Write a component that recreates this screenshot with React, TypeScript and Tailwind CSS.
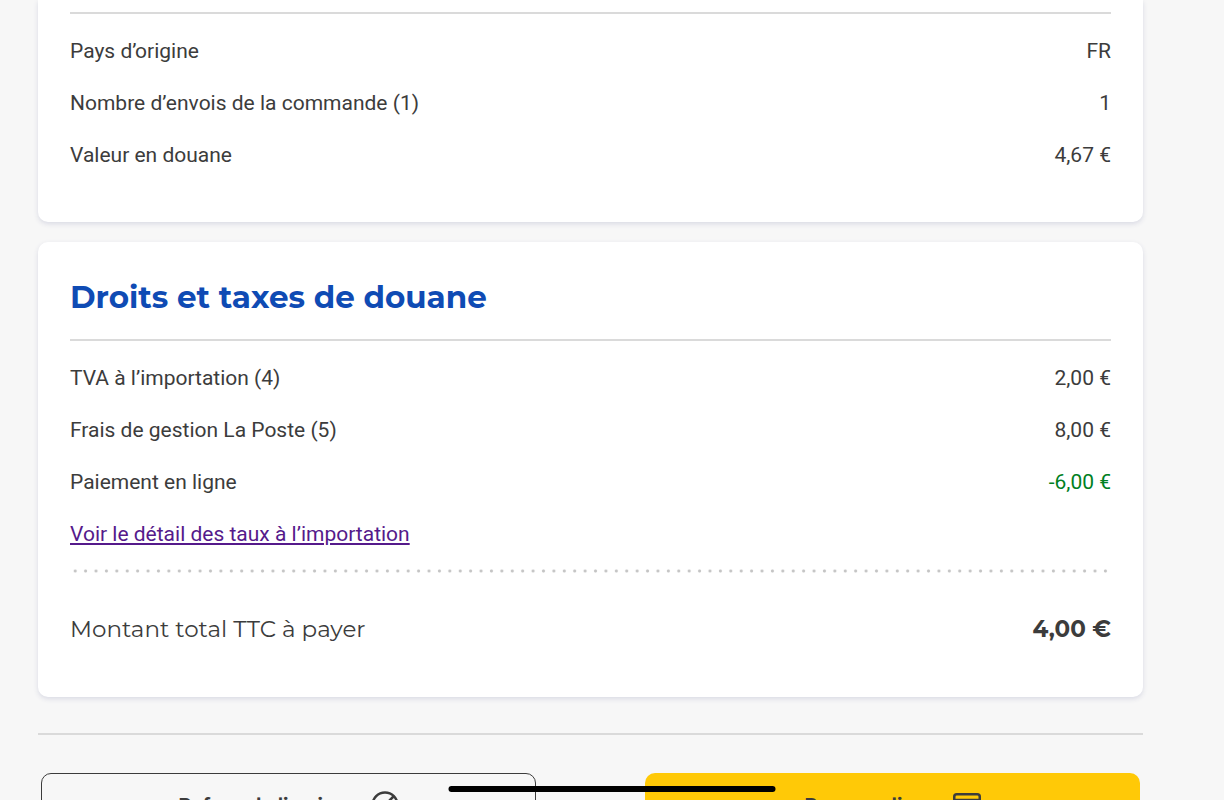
import React from 'react';

interface Line {
  label: string;
  value: string;
  positive?: boolean;
}

const shipment: Line[] = [
  { label: 'Pays d’origine', value: 'FR' },
  { label: 'Nombre d’envois de la commande (1)', value: '1' },
  { label: 'Valeur en douane', value: '4,67 €' },
];

const taxes: Line[] = [
  { label: 'TVA à l’importation (4)', value: '2,00 €' },
  { label: 'Frais de gestion La Poste (5)', value: '8,00 €' },
  { label: 'Paiement en ligne', value: '-6,00 €', positive: true },
];

const Lines: React.FC<{ lines: Line[] }> = ({ lines }) => (
  <dl>
    {lines.map((line) => (
      <div key={line.label} className="flex h-[52px] items-center justify-between">
        <dt>{line.label}</dt>
        <dd className={line.positive ? 'text-[#00801f]' : ''}>{line.value}</dd>
      </div>
    ))}
  </dl>
);

const RefuseIcon = () => (
  <svg className="size-7" viewBox="0 0 28 28" fill="none" stroke="currentColor" strokeWidth="2.5" aria-hidden="true">
    <circle cx="14" cy="14" r="12.5" />
    <path d="M5.5 22.5 22.5 5.5" />
  </svg>
);

const CardIcon = () => (
  <svg className="h-6 w-7" viewBox="0 0 28 24" fill="none" stroke="currentColor" strokeWidth="2.5" aria-hidden="true">
    <rect x="1.25" y="1.25" width="25.5" height="21" rx="2.5" />
    <path d="M1 7h26" />
  </svg>
);

export default function App() {
  return (
    <div className="h-screen overflow-hidden bg-[#f7f7f7] font-['Roboto',sans-serif] text-[21px] leading-8 text-[#3c3c3c]">
      <main className="pr-[81px] pl-[38px]">
        {/* Shipment */}
        <section className="rounded-b-[10px] bg-white px-8 pt-3 pb-[41px] shadow-[0_2px_5px_#d9dae4]">
          <hr className="mb-[11px] border-t-2 border-[#dadada]" />
          <Lines lines={shipment} />
        </section>

        {/* Duties and taxes */}
        <section className="mt-5 rounded-[10px] bg-white px-8 pt-[33px] pb-10 shadow-[0_2px_5px_#d9dae4]">
          <h2 className="font-['Montserrat','Inter',sans-serif] text-[31px] leading-11 font-bold text-[#0f4bb4]">
            Droits et taxes de douane
          </h2>
          <hr className="mt-5 mb-[11px] border-t-2 border-[#dadada]" />
          <Lines lines={taxes} />
          <div className="flex h-[52px] items-center">
            <a href="#taux" className="text-[#551a8b] underline">Voir le détail des taux à l’importation</a>
          </div>
          <div className="mt-[9px] h-1 bg-[radial-gradient(circle,#c4c4c4_1px,transparent_2px)] bg-[length:1%_100%]" />
          <div className="mt-7 flex h-14 items-center justify-between font-['Montserrat','Inter',sans-serif] text-[23px]">
            <span>Montant total TTC à payer</span>
            <span className="font-bold">4,00 €</span>
          </div>
        </section>

        <hr className="mt-9 border-t-2 border-[#dadada]" />

        {/* Actions */}
        <div className="mx-[3px] mt-[38px] grid grid-cols-2 gap-[109px] font-['Montserrat','Inter',sans-serif] text-[18px] font-bold">
          <button type="button" className="flex h-16 items-center justify-center gap-[14px] rounded-[10px] border border-[#3c3c3c]">
            Refuser la livraison
            <RefuseIcon />
          </button>
          <button type="button" className="flex h-16 items-center justify-center gap-[14px] rounded-[10px] bg-[#ffc907]">
            Payer en ligne
            <CardIcon />
          </button>
        </div>
      </main>

      {/* Home indicator */}
      <div className="fixed bottom-2 left-1/2 h-1.5 w-[327px] -translate-x-1/2 rounded-full bg-black" />
    </div>
  );
}
